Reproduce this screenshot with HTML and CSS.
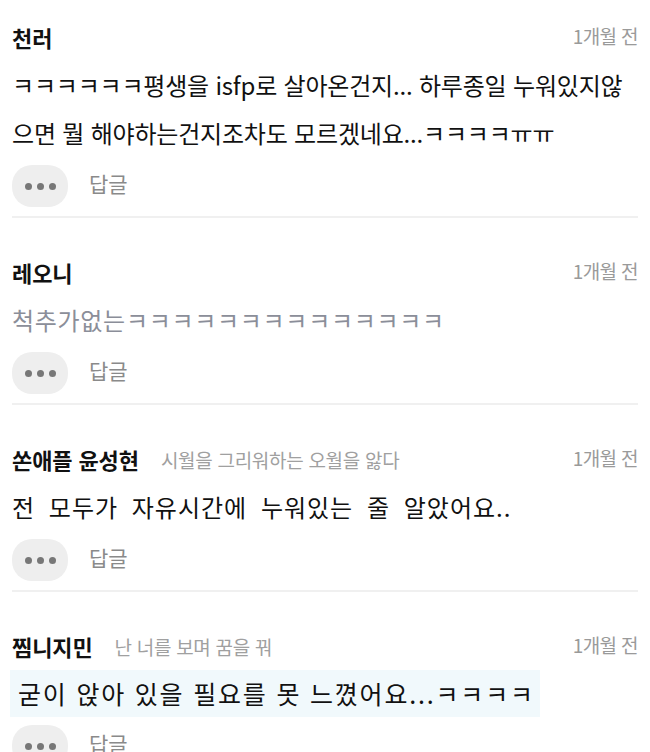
FILE: index.html
```html
<!DOCTYPE html>
<html lang="ko">
<head>
<meta charset="utf-8">
<link rel="stylesheet" href="styles.css">
</head>
<body>
<div class="list">
  <div class="comment">
    <div class="head">
      <span class="name">천러</span>
      <span class="time">1개월 전</span>
    </div>
    <p class="text">ㅋㅋㅋㅋㅋㅋ평생을 isfp로 살아온건지... 하루종일 누워있지않<br>으면 뭘 해야하는건지조차도 모르겠네요...ㅋㅋㅋㅋㅠㅠ</p>
    <div class="actions">
      <span class="more"><i></i><i></i><i></i></span>
      <span class="reply">답글</span>
    </div>
  </div>
  <div class="comment">
    <div class="head">
      <span class="name">레오니</span>
      <span class="time">1개월 전</span>
    </div>
    <p class="text muted">척추가없는ㅋㅋㅋㅋㅋㅋㅋㅋㅋㅋㅋㅋㅋㅋ</p>
    <div class="actions">
      <span class="more"><i></i><i></i><i></i></span>
      <span class="reply">답글</span>
    </div>
  </div>
  <div class="comment">
    <div class="head">
      <span class="name">쏜애플 윤성현</span>
      <span class="sub">시월을 그리워하는 오월을 앓다</span>
      <span class="time">1개월 전</span>
    </div>
    <p class="text spaced">전 모두가 자유시간에 누워있는 줄 알았어요..</p>
    <div class="actions">
      <span class="more"><i></i><i></i><i></i></span>
      <span class="reply">답글</span>
    </div>
  </div>
  <div class="comment">
    <div class="head">
      <span class="name">찜니지민</span>
      <span class="sub">난 너를 보며 꿈을 꿔</span>
      <span class="time">1개월 전</span>
    </div>
    <p class="text highlight">굳이 앉아 있을 필요를 못 느꼈어요...ㅋㅋㅋㅋ</p>
    <div class="actions">
      <span class="more"><i></i><i></i><i></i></span>
      <span class="reply">답글</span>
    </div>
  </div>
</div>
</body>
</html>
```

FILE: styles.css
```css
html, body {
  margin: 0;
  padding: 0;
  background: #ffffff;
  overflow: hidden;
}
body {
  font-family: "Noto Sans CJK KR", "Noto Sans", sans-serif;
  color: #111111;
}
.list {
  margin: 0 12px;
}
.comment {
  padding: 39px 0 9px;
  border-bottom: 2px solid #f0f0f0;
}
.comment:first-child {
  padding-top: 22px;
}
.head {
  display: flex;
  align-items: center;
  height: 30px;
}
.name {
  font-size: 22px;
  font-weight: 700;
  letter-spacing: -0.1px;
  color: #111;
}
.sub {
  margin-left: 22px;
  font-size: 19px;
  color: #a0a0a0;
  letter-spacing: -0.3px;
}
.time {
  margin-left: auto;
  font-size: 19px;
  color: #9a9a9a;
  letter-spacing: -0.6px;
  margin-top: -4px;
}
.text {
  margin: 9px 0 0;
  font-size: 24px;
  line-height: 48px;
  letter-spacing: -0.2px;
  color: #111;
}
.text.muted {
  color: #8b8e99;
  letter-spacing: 0.7px;
}
.text.spaced {
  letter-spacing: 1px;
  word-spacing: 6px;
}
.text.highlight {
  margin-left: -2px;
  width: 530px;
  padding-left: 8px;
  box-sizing: border-box;
  background: #f1f9fc;
  font-size: 25px;
  line-height: 47px;
  letter-spacing: 1.8px;
}
.actions {
  display: flex;
  align-items: center;
  margin-top: 8px;
  height: 42px;
}
.more {
  width: 56px;
  height: 42px;
  border-radius: 20px;
  background: #eeeeee;
  display: flex;
  align-items: center;
  justify-content: center;
  gap: 5px;
}
.more i {
  width: 7px;
  height: 7px;
  border-radius: 50%;
  background: #777777;
}
.reply {
  margin-left: 21px;
  font-size: 21px;
  color: #8a8a8a;
  margin-top: -6px;
}
```
